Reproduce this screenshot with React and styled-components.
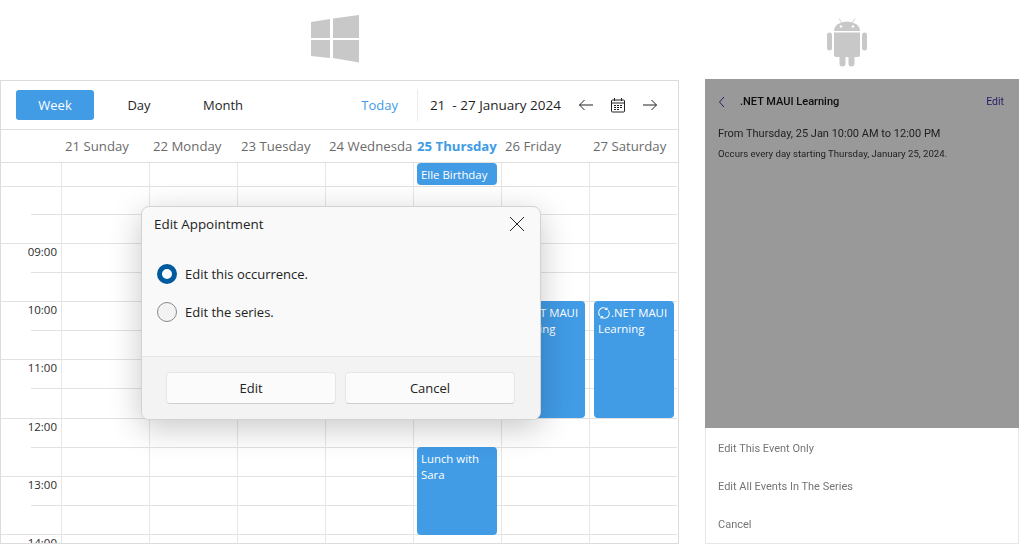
import React from "react";
import styled, { createGlobalStyle } from "styled-components";

const Global = createGlobalStyle`
  html, body { margin: 0; padding: 0; background: #fff; }
  body { width: 1020px; height: 544px; overflow: hidden; font-family: "Open Sans", "Noto Sans", sans-serif; }
  * { box-sizing: border-box; }
`;

const Page = styled.div`
  display: grid;
  grid-template-columns: 679px 314px;
  column-gap: 26px;
  width: 1020px;
  height: 544px;
  overflow: hidden;
`;
const Column = styled.section`
  display: flex;
  flex-direction: column;
  min-width: 0;
  height: 544px;
`;
const IconSlot = styled.div`
  height: ${p => p.$h}px;
  flex: none;
  display: flex;
  justify-content: center;
  align-items: flex-start;
  padding-top: ${p => p.$top}px;
  padding-right: ${p => p.$right}px;
  color: #c8c8c8;
  svg { display: block; }
`;

const Scheduler = styled.div`
  position: relative;
  flex: 1;
  min-height: 0;
  overflow: hidden;
  border: 1px solid #dcdcdc;
`;
const Toolbar = styled.div`
  height: 49px;
  display: flex;
  align-items: center;
  padding: 0 15px;
  border-bottom: 1px solid #dfdfdf;
  font-size: 13px;
  color: #222;
`;
const ViewButton = styled.div`
  width: ${p => p.$w}px;
  height: 30px;
  display: flex;
  align-items: center;
  justify-content: center;
  border-radius: 3px;
  background: ${p => (p.$active ? "#419be5" : "transparent")};
  color: ${p => (p.$active ? "#fff" : "#262626")};
`;
const Spacer = styled.div`flex: 1;`;
const TodayLink = styled.div`
  color: #419be5;
  margin-right: 19px;
`;
const Divider = styled.div`
  width: 1px;
  height: 32px;
  background: #ececec;
  margin-right: 12px;
`;
const DateRange = styled.div`
  color: #1f1f1f;
  white-space: pre;
  font-size: 13.5px;
  margin-right: 17px;
`;
const NavIcons = styled.div`
  display: flex;
  align-items: center;
  gap: 17px;
  margin-right: 5px;
  color: #222;
  svg { display: block; }
`;
const DayHeader = styled.div`
  height: 33px;
  display: grid;
  grid-template-columns: 60px repeat(7, 88px);
  border-bottom: 1px solid #dfdfdf;
`;
const DayTitle = styled.div`
  padding-left: 4px;
  line-height: 33px;
  font-size: 13.2px;
  white-space: nowrap;
  overflow: hidden;
  color: ${p => (p.$today ? "#419be5" : "#6b6b6b")};
  font-weight: ${p => (p.$today ? 700 : 400)};
`;
const Row = styled.div`
  display: grid;
  grid-template-columns: 60px repeat(7, 88px);
  height: ${p => p.$h}px;
`;
const TimeCell = styled.div`
  background: linear-gradient(#e2e2e2, #e2e2e2) no-repeat right bottom / ${p => (p.$half ? "30px" : "100%")} 1px;
  font-size: 11.5px;
  color: #2b2b2b;
  text-align: right;
  padding-right: 4px;
  line-height: 16px;
  white-space: nowrap;
`;
const Cell = styled.div`
  border-left: 1px solid #e6e6e6;
  border-bottom: 1px solid #e2e2e2;
`;
const Appointment = styled.div`
  position: absolute;
  left: ${p => p.$x}px;
  top: ${p => p.$y}px;
  width: 80px;
  height: ${p => p.$h}px;
  background: #419be5;
  border-radius: 4px;
  color: #fff;
  font-size: 11.4px;
  line-height: 16px;
  padding: 4px;
  overflow: hidden;
`;
const RecurIcon = styled.svg`
  display: inline-block;
  vertical-align: -2px;
  margin-right: 1px;
`;
const Dialog = styled.div`
  position: absolute;
  left: 140px;
  top: 125px;
  width: 400px;
  height: 214px;
  background: #f9f9f9;
  border: 1px solid #d2d2d2;
  border-radius: 8px;
  box-shadow: 0 8px 32px rgba(0, 0, 0, 0.22);
  display: flex;
  flex-direction: column;
  overflow: hidden;
  color: #222;
  font-size: 13px;
`;
const DialogHead = styled.div`
  height: 33px;
  display: flex;
  align-items: center;
  justify-content: space-between;
  padding: 0 15px 0 12px;
  font-size: 13.4px;
`;
const DialogBody = styled.div`
  flex: 1;
  display: flex;
  flex-direction: column;
  gap: 18px;
  padding: 24px 15px 0;
`;
const RadioRow = styled.div`
  display: flex;
  align-items: center;
  gap: 8px;
  height: 20px;
`;
const Radio = styled.div`
  width: 20px;
  height: 20px;
  border-radius: 50%;
  background: ${p => (p.$on ? "#fff" : "#f3f3f3")};
  border: ${p => (p.$on ? "5px solid #005a9e" : "1px solid #8a8a8a")};
`;
const DialogFoot = styled.div`
  height: 63px;
  flex: none;
  background: #f3f3f3;
  border-top: 1px solid #e5e5e5;
  display: flex;
  gap: 9px;
  padding: 15px 24px 0;
`;
const FootButton = styled.div`
  width: 170px;
  height: 32px;
  display: flex;
  align-items: center;
  justify-content: center;
  background: #fbfbfb;
  border: 1px solid #e6e6e6;
  border-bottom-color: #cfcfcf;
  border-radius: 4px;
`;

const Android = styled.div`
  flex: 1;
  min-height: 0;
  display: flex;
  flex-direction: column;
  font-family: Roboto, sans-serif;
  filter: blur(0.25px);
`;
const Dimmed = styled.div`
  height: 349px;
  flex: none;
  background: #999999;
  padding: 14px 15px 0 13px;
  color: #111;
`;
const MobileBar = styled.div`
  display: flex;
  align-items: center;
  height: 17px;
  font-size: 11px;
  svg { display: block; margin-right: 14px; }
`;
const MobileTitle = styled.div`
  flex: 1;
  font-weight: 500;
  color: #0d0d0d;
`;
const MobileEdit = styled.div`
  color: #2a1a66;
  font-size: 10.5px;
`;
const FromLine = styled.div`
  font-size: 11px;
  line-height: 14px;
  margin-top: 17px;
  color: #1e1e1e;
`;
const OccursLine = styled.div`
  font-size: 9.6px;
  line-height: 12px;
  margin-top: 7px;
  color: #1e1e1e;
`;
const Sheet = styled.div`
  flex: 1;
  background: #fff;
  border: 1px solid #e6e6e6;
  border-top: none;
  margin-bottom: 1px;
  display: flex;
  flex-direction: column;
  padding: 1px 0 0 12px;
`;
const SheetItem = styled.div`
  height: 38px;
  display: flex;
  align-items: center;
  font-size: 11px;
  color: #757575;
`;

const hours = { 2: "09:00", 4: "10:00", 6: "11:00", 8: "12:00", 10: "13:00", 12: "14:00" };
const days = ["21 Sunday", "22 Monday", "23 Tuesday", "24 Wednesda", "25 Thursday", "26 Friday", "27 Saturday"];

const WindowsLogo = () => (
  <svg width="50" height="50" viewBox="0 0 50 50" fill="currentColor">
    <path d="M1 8 L20 5 V24 H1 Z M23 4.5 L49 1 V24 H23 Z M1 26 H20 V44 L1 42 Z M23 26 H49 V48.5 L23 44 Z" />
  </svg>
);
const AndroidLogo = () => (
  <svg width="40" height="49" viewBox="0 0 40 49" fill="currentColor">
    <path d="M7 13 A13 9.5 0 0 1 33 13 Z" />
    <path d="M7 14.5 H33 V37 a2 2 0 0 1-2 2 H27.5 V45.5 a3 3 0 0 1-6 0 V39 H18.5 V45.5 a3 3 0 0 1-6 0 V39 H9 a2 2 0 0 1-2-2 Z" />
    <rect x="0" y="14.5" width="5" height="18" rx="2.5" />
    <rect x="35" y="14.5" width="5" height="18" rx="2.5" />
    <path d="M12 0.5 L15 5 M28 0.5 L25 5" stroke="currentColor" strokeWidth=".8" />
    <circle cx="14" cy="8.5" r="1.2" fill="#fff" />
    <circle cx="26" cy="8.5" r="1.2" fill="#fff" />
  </svg>
);
const Arrow = ({ flip }) => (
  <svg width="16" height="12" viewBox="0 0 16 12" fill="none" stroke="currentColor" strokeWidth="1" style={flip ? { transform: "scaleX(-1)" } : undefined}>
    <path d="M15 6 H1.5 M6.5 1 L1.5 6 L6.5 11" />
  </svg>
);
const CalendarIcon = () => (
  <svg width="14" height="15" viewBox="0 0 14 15" fill="none" stroke="currentColor">
    <rect x=".5" y="2" width="13" height="12" rx="1" />
    <path d="M.5 5 H13.5 M3.5 0 V3 M10.5 0 V3" />
    <path d="M3 7.5h2M6 7.5h2M9 7.5h2M3 9.5h2M6 9.5h2M9 9.5h2M3 11.5h2M6 11.5h2" strokeWidth="1.2" />
  </svg>
);
const Recur = () => (
  <RecurIcon width="12" height="12" viewBox="0 0 13 13" fill="none" stroke="#fff" strokeWidth="1.1">
    <path d="M2.2 9.5 A5 5 0 0 1 9.5 2.4 M10.8 3.5 A5 5 0 0 1 3.5 10.6" />
    <path d="M9.8 .5 V2.8 H7.5 M3.2 12.5 V10.2 H5.5" />
  </RecurIcon>
);

export default function App() {
  return (
    <Page>
      <Global />
      <Column>
        <IconSlot $h={80} $top={14} $right={9}><WindowsLogo /></IconSlot>
        <Scheduler>
          <Toolbar>
            <ViewButton $w={78} $active>Week</ViewButton>
            <ViewButton $w={90}>Day</ViewButton>
            <ViewButton $w={78}>Month</ViewButton>
            <Spacer />
            <TodayLink>Today</TodayLink>
            <Divider />
            <DateRange>21  - 27 January 2024</DateRange>
            <NavIcons><Arrow /><CalendarIcon /><Arrow flip /></NavIcons>
          </Toolbar>
          <DayHeader>
            <div />
            {days.map((d, i) => <DayTitle key={d} $today={i === 4}>{d}</DayTitle>)}
          </DayHeader>
          <Row $h={24}>
            <TimeCell />
            {days.map(d => <Cell key={d} />)}
          </Row>
          {Array.from({ length: 13 }, (_, r) => (
            <Row key={r} $h={r === 0 ? 28 : 29.08}>
              <TimeCell $half={r % 2 === 0}>{hours[r]}</TimeCell>
              {days.map(d => <Cell key={d} />)}
            </Row>
          ))}
          <Appointment $x={416} $y={82} $h={22}>Elle Birthday</Appointment>
          <Appointment $x={504} $y={220} $h={117}><Recur />.NET MAUI Learning</Appointment>
          <Appointment $x={593} $y={220} $h={117}><Recur />.NET MAUI Learning</Appointment>
          <Appointment $x={416} $y={366} $h={88}>Lunch with Sara</Appointment>
          <Dialog>
            <DialogHead>
              Edit Appointment
              <svg width="16" height="16" viewBox="0 0 16 16" stroke="#222" fill="none"><path d="M1 1 L15 15 M15 1 L1 15" /></svg>
            </DialogHead>
            <DialogBody>
              <RadioRow><Radio $on />Edit this occurrence.</RadioRow>
              <RadioRow><Radio />Edit the series.</RadioRow>
            </DialogBody>
            <DialogFoot>
              <FootButton>Edit</FootButton>
              <FootButton>Cancel</FootButton>
            </DialogFoot>
          </Dialog>
        </Scheduler>
      </Column>
      <Column>
        <IconSlot $h={79} $top={18} $right={31}><AndroidLogo /></IconSlot>
        <Android>
          <Dimmed>
            <MobileBar>
              <svg width="8" height="12" viewBox="0 0 8 12" fill="none" stroke="#2a1a66"><path d="M6 1 L1.5 6 L6 11" /></svg>
              <MobileTitle>.NET MAUI Learning</MobileTitle>
              <MobileEdit>Edit</MobileEdit>
            </MobileBar>
            <FromLine>From Thursday, 25 Jan 10:00 AM to 12:00 PM</FromLine>
            <OccursLine>Occurs every day starting Thursday, January 25, 2024.</OccursLine>
          </Dimmed>
          <Sheet>
            <SheetItem>Edit This Event Only</SheetItem>
            <SheetItem>Edit All Events In The Series</SheetItem>
            <SheetItem>Cancel</SheetItem>
          </Sheet>
        </Android>
      </Column>
    </Page>
  );
}
